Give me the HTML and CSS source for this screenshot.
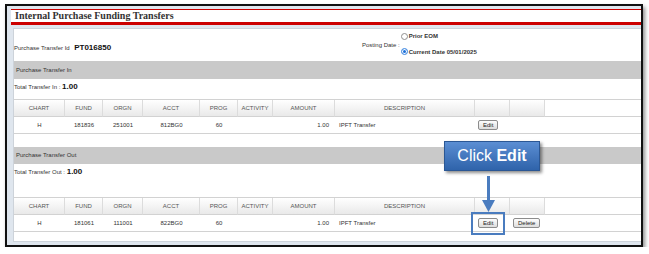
FILE: index.html
```html
<!DOCTYPE html>
<html>

<head>
    <title>Internal Purchase Funding Transfers</title>
    <link rel="stylesheet" href="styles.css">
</head>

<body>
    <div class="frame">
        <div class="title">Internal Purchase Funding Transfers</div>
        <div class="panel">
            <div class="idrow">
                <div class="tid"><span class="lbl">Purchase Transfer Id</span> <b class="tidval">PT016850</b></div>
                <div class="posting">
                    <span class="lbl">Posting Date :</span>
                    <div class="radios">
                        <div class="radio radio-top"><span class="dot"></span>Prior EOM</div>
                        <div class="radio"><span class="dot on"></span>Current Date 05/01/2025</div>
                    </div>
                </div>
            </div>

            <div class="band">Purchase Transfer In</div>
            <div class="total">Total Transfer In : <b>1.00</b></div>
            <table class="lines">
                <colgroup>
                    <col class="c-chart"><col class="c-fund"><col class="c-orgn"><col class="c-acct"><col class="c-prog">
                    <col class="c-activity"><col class="c-amount"><col class="c-desc"><col class="c-btn"><col class="c-btn"><col>
                </colgroup>
                <thead>
                    <tr>
                        <th>CHART</th><th>FUND</th><th>ORGN</th><th>ACCT</th><th>PROG</th>
                        <th>ACTIVITY</th><th>AMOUNT</th><th>DESCRIPTION</th><th></th><th></th><th class="filler"></th>
                    </tr>
                </thead>
                <tbody>
                    <tr>
                        <td>H</td><td>181836</td><td>251001</td><td>812BG0</td><td>60</td>
                        <td></td><td class="amount">1.00</td><td class="desc">IPFT Transfer</td>
                        <td class="act"><button type="button" class="btn">Edit</button></td><td></td><td></td>
                    </tr>
                </tbody>
            </table>

            <div class="band band-out">Purchase Transfer Out</div>
            <div class="total total-out">Total Transfer Out : <b>1.00</b></div>
            <table class="lines">
                <colgroup>
                    <col class="c-chart"><col class="c-fund"><col class="c-orgn"><col class="c-acct"><col class="c-prog">
                    <col class="c-activity"><col class="c-amount"><col class="c-desc"><col class="c-btn"><col class="c-btn"><col>
                </colgroup>
                <thead>
                    <tr>
                        <th>CHART</th><th>FUND</th><th>ORGN</th><th>ACCT</th><th>PROG</th>
                        <th>ACTIVITY</th><th>AMOUNT</th><th>DESCRIPTION</th><th></th><th></th><th class="filler"></th>
                    </tr>
                </thead>
                <tbody>
                    <tr>
                        <td>H</td><td>181061</td><td>111001</td><td>822BG0</td><td>60</td>
                        <td></td><td class="amount">1.00</td><td class="desc">IPFT Transfer</td>
                        <td class="act"><button type="button" class="btn">Edit</button></td>
                        <td class="act"><button type="button" class="btn">Delete</button></td><td></td>
                    </tr>
                </tbody>
            </table>
        </div>

        <!-- annotation over the page -->
        <div class="callout">Click <b>Edit</b></div>
        <svg class="arrow" width="13" height="36" viewBox="0 0 13 36">
            <line x1="6.5" y1="0" x2="6.5" y2="26" stroke="#4a7cbf" stroke-width="3"/>
            <polygon points="0,24 13,24 6.5,36" fill="#4a7cbf"/>
        </svg>
        <div class="focus"></div>
    </div>
</body>

</html>
```

FILE: styles.css
```css
body {
    margin: 0;
    background: #fff;
    font-family: "Liberation Sans", Arial, sans-serif;
    color: #333;
}

.frame {
    position: relative;
    width: 634px;
    margin: 4px 0 0 5px;
    padding: 3px 0;
    border: 2px solid #111;
    background: #dfe6ee;
    box-shadow: 2px 3px 4px rgba(0, 0, 0, 0.45);
}

.title {
    margin-left: 4px;
    height: 12px;
    line-height: 12px;
    padding-left: 4px;
    border-top: 1px solid #cc0000;
    border-bottom: 3px solid #cc0000;
    background: #fff;
    font: bold 10px "Liberation Serif", serif;
    color: #333;
}

.panel {
    margin: 3px 0 0 6px;
    padding-bottom: 9px;
    border: 1px solid #cdd3da;
    border-right: none;
    background: #fff;
}

.idrow {
    display: grid;
    grid-template-columns: 348px auto;
    align-items: center;
    height: 32px;
}

.lbl {
    font-size: 6px;
}

.tidval {
    font-size: 8px;
    color: #111;
}

.posting {
    display: flex;
    align-items: center;
    gap: 1px;
}

.radios {
    display: flex;
    flex-direction: column;
    gap: 2px;
    font-size: 6px;
    font-weight: bold;
}

.radio {
    display: flex;
    align-items: center;
    gap: 1px;
    height: 11px;
}

.radio-top {
    align-items: flex-start;
}

.dot {
    width: 5px;
    height: 5px;
    border: 1px solid #8f8f8f;
    border-radius: 50%;
    background: #fff;
}

.dot.on {
    border-color: #5d9be6;
    background: #1b6fd9;
    box-shadow: inset 0 0 0 1px #fff;
}

.band {
    height: 18px;
    line-height: 18px;
    padding-left: 2px;
    background: #c9c9c9;
    font-size: 6px;
}

.band-out {
    margin-top: 13px;
    height: 17px;
    line-height: 17px;
}

.total {
    height: 20px;
    line-height: 16px;
    font-size: 6px;
}

.total b {
    font-size: 8px;
    color: #111;
}

.total-out {
    height: 33px;
}

table.lines {
    width: 100%;
    table-layout: fixed;
    border-collapse: separate;
    border-spacing: 0;
    border-top: 1px solid #d2d2d2;
    border-bottom: 1px solid #d2d2d2;
    font-size: 6px;
}

.c-chart { width: 51px; }
.c-fund { width: 38px; }
.c-orgn { width: 40px; }
.c-acct { width: 57px; }
.c-prog { width: 38px; }
.c-activity { width: 35px; }
.c-amount { width: 62px; }
.c-desc { width: 140px; }
.c-btn { width: 35px; }

.lines th {
    height: 16px;
    padding: 0;
    border-right: 1px solid #dcdcdc;
    border-bottom: 1px solid #d2d2d2;
    background: linear-gradient(#ffffff, #e9e9e9);
    color: #555;
    font-weight: normal;
    text-align: center;
}

.lines th.filler {
    border-right: none;
    background: #fff;
}

.lines td {
    height: 16px;
    padding: 0;
    text-align: center;
    color: #333;
}

.lines td.amount {
    text-align: right;
    padding-right: 6px;
}

.lines td.desc {
    text-align: left;
    padding-left: 4px;
}

.lines td.act {
    text-align: left;
    padding-left: 3px;
}

.btn {
    height: 10px;
    padding: 0 4px;
    border: 1px solid #8c8c8c;
    border-radius: 2px;
    background: linear-gradient(#fdfdfd, #dddddd);
    color: #222;
    font: 6px "Liberation Sans", Arial, sans-serif;
    line-height: 8px;
}

.callout {
    position: absolute;
    left: 437px;
    top: 135px;
    width: 96px;
    height: 30px;
    box-sizing: border-box;
    border: 1px solid #2b5794;
    background: linear-gradient(#5b8ed3, #2f63aa);
    box-shadow: 2px 2px 3px rgba(0, 0, 0, 0.45);
    color: #fff;
    font-size: 16px;
    line-height: 28px;
    text-align: center;
}

.arrow {
    position: absolute;
    left: 475px;
    top: 170px;
}

.focus {
    position: absolute;
    left: 464px;
    top: 206px;
    width: 34px;
    height: 23px;
    box-sizing: border-box;
    border: 2px solid #4a7cbf;
}
```
